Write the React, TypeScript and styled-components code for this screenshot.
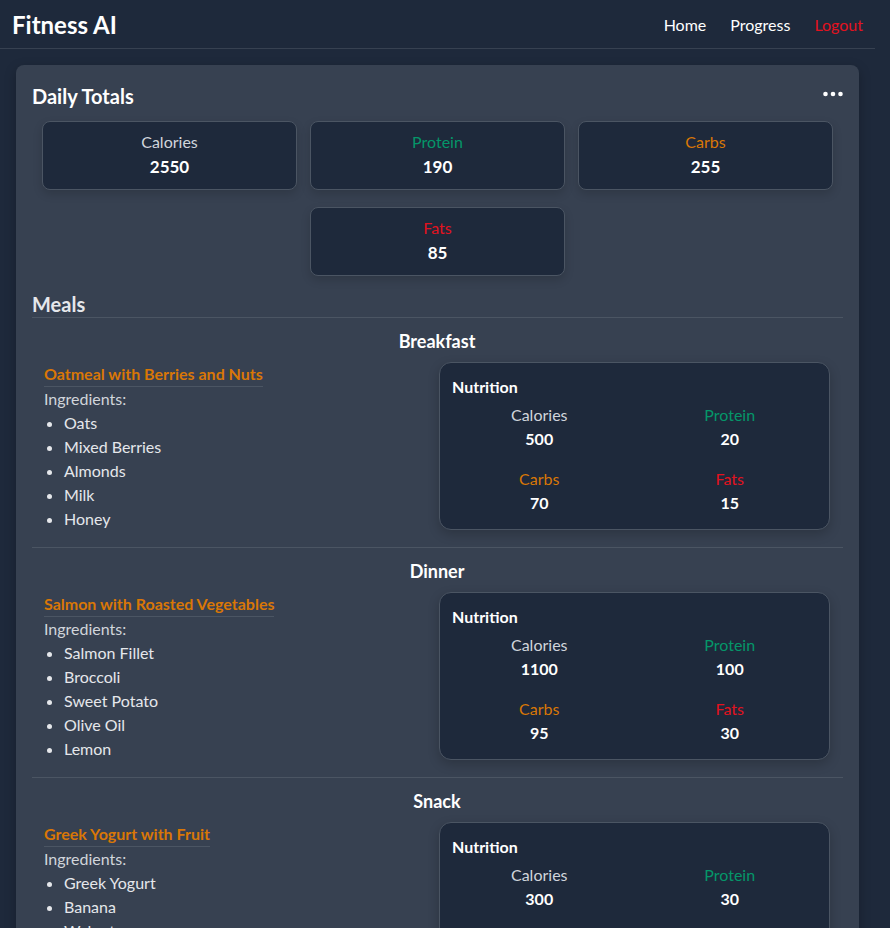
import React from "react";
import styled, { createGlobalStyle } from "styled-components";

type Macro = "calories" | "protein" | "carbs" | "fats";

const macroColor: Record<Macro, string> = {
  calories: "#d1d5db",
  protein: "#059669",
  carbs: "#d97706",
  fats: "#e3121f",
};

const macroLabel: Record<Macro, string> = {
  calories: "Calories",
  protein: "Protein",
  carbs: "Carbs",
  fats: "Fats",
};

interface Meal {
  type: string;
  name: string;
  ingredients: string[];
  nutrition: Record<Macro, number>;
}

const totals: Record<Macro, number> = {
  calories: 2550,
  protein: 190,
  carbs: 255,
  fats: 85,
};

const meals: Meal[] = [
  {
    type: "Breakfast",
    name: "Oatmeal with Berries and Nuts",
    ingredients: ["Oats", "Mixed Berries", "Almonds", "Milk", "Honey"],
    nutrition: { calories: 500, protein: 20, carbs: 70, fats: 15 },
  },
  {
    type: "Dinner",
    name: "Salmon with Roasted Vegetables",
    ingredients: ["Salmon Fillet", "Broccoli", "Sweet Potato", "Olive Oil", "Lemon"],
    nutrition: { calories: 1100, protein: 100, carbs: 95, fats: 30 },
  },
  {
    type: "Snack",
    name: "Greek Yogurt with Fruit",
    ingredients: ["Greek Yogurt", "Banana", "Walnuts", "Honey"],
    nutrition: { calories: 300, protein: 30, carbs: 35, fats: 10 },
  },
];

const macros: Macro[] = ["calories", "protein", "carbs", "fats"];

const App: React.FC = () => {
  return (
    <>
      <GlobalStyle />
      <Page>
        <Navbar>
          <Brand>Fitness AI</Brand>
          <NavLinks>
            <NavLink>Home</NavLink>
            <NavLink>Progress</NavLink>
            <NavLink $danger>Logout</NavLink>
          </NavLinks>
        </Navbar>
        <Main>
          <Card>
            <CardHeader>
              <CardTitle>Daily Totals</CardTitle>
              <MoreButton aria-label="More">
                <svg width="20" height="6" viewBox="0 0 20 6">
                  <circle cx="2.5" cy="3" r="2.3" fill="#fff" />
                  <circle cx="10" cy="3" r="2.3" fill="#fff" />
                  <circle cx="17.5" cy="3" r="2.3" fill="#fff" />
                </svg>
              </MoreButton>
            </CardHeader>
            <TotalsGrid>
              {macros.map((m) => (
                <TotalBox key={m}>
                  <TotalLabel $macro={m}>{macroLabel[m]}</TotalLabel>
                  <TotalValue>{totals[m]}</TotalValue>
                </TotalBox>
              ))}
            </TotalsGrid>
            <SectionTitle>Meals</SectionTitle>
            {meals.map((meal) => (
              <MealSection key={meal.type}>
                <MealType>{meal.type}</MealType>
                <MealRow>
                  <MealInfo>
                    <MealName>{meal.name}</MealName>
                    <IngredientsLabel>Ingredients:</IngredientsLabel>
                    <IngredientList>
                      {meal.ingredients.map((i) => (
                        <li key={i}>{i}</li>
                      ))}
                    </IngredientList>
                  </MealInfo>
                  <NutritionBox>
                    <NutritionTitle>Nutrition</NutritionTitle>
                    <NutritionGrid>
                      {macros.map((m) => (
                        <NutritionCell key={m}>
                          <NutritionLabel $macro={m}>{macroLabel[m]}</NutritionLabel>
                          <NutritionValue>{meal.nutrition[m]}</NutritionValue>
                        </NutritionCell>
                      ))}
                    </NutritionGrid>
                  </NutritionBox>
                </MealRow>
              </MealSection>
            ))}
          </Card>
        </Main>
      </Page>
    </>
  );
};

export default App;

const GlobalStyle = createGlobalStyle`
  * {
    box-sizing: border-box;
  }
  body {
    margin: 0;
    background: #1e293b;
    color: #f3f4f6;
    font-family: Lato, "Open Sans", sans-serif;
  }
`;

// the reference keeps a 15px scrollbar gutter on the right
const Page = styled.div`
  width: calc(100vw - 15px);
  height: 100vh;
  overflow-y: auto;

  &::-webkit-scrollbar {
    width: 15px;
  }
  &::-webkit-scrollbar-track {
    background: #2b2b2b;
  }
  &::-webkit-scrollbar-thumb {
    background: #9f9f9f;
  }
`;

const Navbar = styled.nav`
  height: 49px;
  display: flex;
  align-items: center;
  justify-content: space-between;
  padding: 0 12px 0 12px;
  border-bottom: 1px solid #374151;
  background: #1e293b;
`;

const Brand = styled.div`
  font-size: 24px;
  font-weight: 700;
  color: #fff;
`;

const NavLinks = styled.div`
  display: flex;
  gap: 24px;
`;

const NavLink = styled.a<{ $danger?: boolean }>`
  font-size: 16px;
  color: ${(p) => (p.$danger ? "#e3121f" : "#fff")};
  cursor: pointer;
`;

const Main = styled.main`
  padding: 16px;
`;

const Card = styled.section`
  background: #374151;
  border-radius: 8px;
  padding: 16px;
  box-shadow: 0 4px 12px rgba(0, 0, 0, 0.25);
`;

const CardHeader = styled.div`
  display: flex;
  align-items: center;
  justify-content: space-between;
  height: 30px;
  margin-bottom: 10px;
`;

const CardTitle = styled.h2`
  margin: 0;
  font-size: 20px;
  font-weight: 700;
  color: #fff;
`;

const MoreButton = styled.button`
  background: none;
  border: none;
  padding: 0 0 4px 0;
  cursor: pointer;
  display: flex;
`;

const TotalsGrid = styled.div`
  display: flex;
  flex-wrap: wrap;
  justify-content: center;
  column-gap: 13px;
  row-gap: 17px;
  padding: 0 10px;
`;

const TotalBox = styled.div`
  width: calc((100% - 26px) / 3);
  background: #1e293b;
  border: 1px solid #4b5563;
  border-radius: 8px;
  padding: 8px 8px 9px;
  text-align: center;
  box-shadow: 0 4px 10px rgba(0, 0, 0, 0.15);
`;

const TotalLabel = styled.div<{ $macro: Macro }>`
  font-size: 16px;
  line-height: 24px;
  color: ${(p) => macroColor[p.$macro]};
`;

const TotalValue = styled.div`
  font-size: 17px;
  line-height: 26px;
  font-weight: 700;
  color: #fff;
`;

const SectionTitle = styled.h3`
  margin: 15px 0 0;
  font-size: 20px;
  line-height: 26px;
  font-weight: 700;
  color: #e5e7eb;
  border-bottom: 1px solid #4b5563;
`;

const MealSection = styled.div`
  padding: 0 13px 16px 12px;
  border-bottom: 1px solid #4b5563;
  &:last-child {
    border-bottom: none;
  }
`;

const MealType = styled.h4`
  margin: 11px 0 9px;
  text-align: center;
  font-size: 18px;
  line-height: 24px;
  font-weight: 700;
  color: #fff;
`;

const MealRow = styled.div`
  display: grid;
  grid-template-columns: 1fr 1fr;
  gap: 4px;
  align-items: start;
`;

const MealInfo = styled.div`
  display: flex;
  flex-direction: column;
  align-items: flex-start;
`;

const MealName = styled.div`
  font-size: 16px;
  line-height: 24px;
  font-weight: 700;
  color: #d97706;
  border-bottom: 1px solid #4b5563;
`;

const IngredientsLabel = styled.div`
  font-size: 16px;
  line-height: 24px;
  color: #d1d5db;
`;

const IngredientList = styled.ul`
  margin: 0;
  padding-left: 20px;
  font-size: 16px;
  line-height: 24px;
  color: #e5e7eb;
`;

const NutritionBox = styled.div`
  background: #1e293b;
  border: 1px solid #4b5563;
  border-radius: 12px;
  padding: 12px 12px 14px;
  box-shadow: 0 4px 12px rgba(0, 0, 0, 0.2);
`;

const NutritionTitle = styled.div`
  font-size: 16px;
  line-height: 24px;
  font-weight: 700;
  color: #fff;
  margin-bottom: 4px;
`;

const NutritionGrid = styled.div`
  display: grid;
  grid-template-columns: 1fr 1fr;
  column-gap: 16px;
  row-gap: 16px;
`;

const NutritionCell = styled.div`
  text-align: center;
`;

const NutritionLabel = styled.div<{ $macro: Macro }>`
  font-size: 16px;
  line-height: 24px;
  color: ${(p) => macroColor[p.$macro]};
`;

const NutritionValue = styled.div`
  font-size: 16px;
  line-height: 24px;
  font-weight: 700;
  color: #fff;
`;
